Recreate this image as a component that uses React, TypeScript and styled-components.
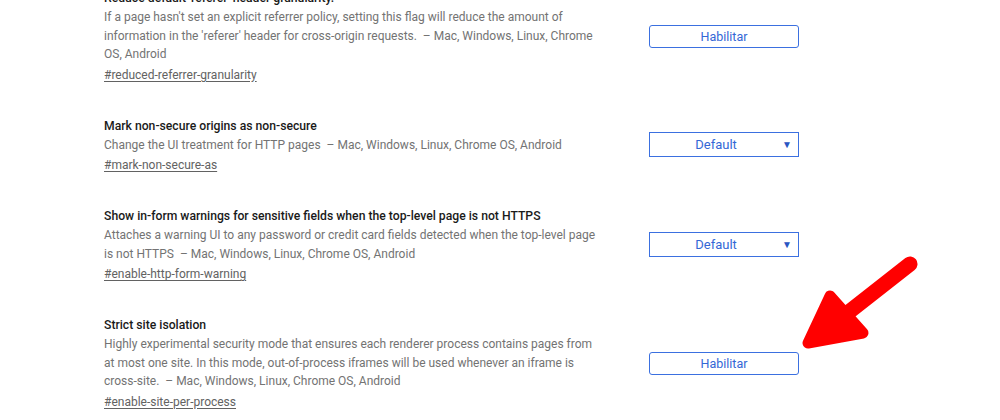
import React from "react";
import styled, { createGlobalStyle } from "styled-components";

const GlobalStyle = createGlobalStyle`
  html, body {
    margin: 0;
    padding: 0;
    background: #fff;
    overflow: hidden;
  }
  body {
    font-family: Roboto, "Liberation Sans", Arial, sans-serif;
    font-size: 12px;
  }
`;

const Page = styled.div`
  position: relative;
  width: 1000px;
  height: 420px;
  overflow: hidden;
`;

const List = styled.div`
  display: flex;
  flex-direction: column;
  gap: 33px;
  margin-top: -11px;
  padding-left: 104px;
`;

const Experiment = styled.div`
  display: grid;
  grid-template-columns: 500px 150px;
  column-gap: 45px;
  align-items: center;
`;

const Title = styled.div`
  font-weight: 500;
  font-size: 12.2px;
  color: #1a1a1a;
  line-height: 18px;
  margin-bottom: 1px;
  white-space: nowrap;
`;

const Description = styled.p`
  margin: 0;
  color: #737373;
  font-size: 12px;
  line-height: 18.5px;
`;

const Permalink = styled.a`
  display: inline-block;
  margin-top: 2px;
  line-height: 18px;
  font-size: 12px;
  color: #626262;
  text-decoration: underline;
  text-underline-offset: 2px;
`;

const ActionButton = styled.button`
  width: 150px;
  height: 23px;
  padding: 0;
  border: 1px solid #3b70e0;
  border-radius: 3px;
  background: #fff;
  color: #3367d6;
  font-family: Roboto, "Liberation Sans", Arial, sans-serif;
  font-size: 12.5px;
`;

const SelectBox = styled.div`
  box-sizing: border-box;
  width: 150px;
  height: 25px;
  margin-top: -2px;
  border: 1px solid #3b70e0;
  display: grid;
  grid-template-columns: 1fr auto;
  align-items: center;
  color: #3367d6;
  font-size: 13px;
`;

const SelectLabel = styled.span`
  text-align: center;
`;

const Caret = styled.span`
  font-size: 10px;
  padding-right: 6px;
  color: #2b55c2;
`;

const ArrowLayer = styled.svg`
  position: absolute;
  left: 0;
  top: 0;
  pointer-events: none;
`;

type Flag = {
  title: string;
  description: string;
  link: string;
  control: "button" | "select";
};

const platforms = "\u00a0 – Mac, Windows, Linux, Chrome OS, Android";

const flags: Flag[] = [
  {
    title: "Reduce default 'referer' header granularity.",
    description:
      "If a page hasn't set an explicit referrer policy, setting this flag will reduce the amount of information in the 'referer' header for cross-origin requests." +
      platforms,
    link: "#reduced-referrer-granularity",
    control: "button",
  },
  {
    title: "Mark non-secure origins as non-secure",
    description: "Change the UI treatment for HTTP pages" + platforms,
    link: "#mark-non-secure-as",
    control: "select",
  },
  {
    title:
      "Show in-form warnings for sensitive fields when the top-level page is not HTTPS",
    description:
      "Attaches a warning UI to any password or credit card fields detected when the top-level page is not HTTPS" +
      platforms,
    link: "#enable-http-form-warning",
    control: "select",
  },
  {
    title: "Strict site isolation",
    description:
      "Highly experimental security mode that ensures each renderer process contains pages from at most one site. In this mode, out-of-process iframes will be used whenever an iframe is cross-site." +
      platforms,
    link: "#enable-site-per-process",
    control: "button",
  },
];

export default function App() {
  return (
    <Page>
      <GlobalStyle />
      <List>
        {flags.map((f) => (
          <Experiment key={f.link}>
            <div>
              <Title>{f.title}</Title>
              <Description>{f.description}</Description>
              <Permalink href={f.link}>{f.link}</Permalink>
            </div>
            {f.control === "button" ? (
              <ActionButton>Habilitar</ActionButton>
            ) : (
              <SelectBox>
                <SelectLabel>Default</SelectLabel>
                <Caret>▼</Caret>
              </SelectBox>
            )}
          </Experiment>
        ))}
      </List>
      <ArrowLayer width="1000" height="420" viewBox="0 0 1000 420">
        <line
          x1="910"
          y1="264"
          x2="845"
          y2="315"
          stroke="#ff0000"
          strokeWidth="15"
          strokeLinecap="round"
        />
        <polygon
          points="808,343 830,296 863,333"
          fill="#ff0000"
          stroke="#ff0000"
          strokeWidth="11"
          strokeLinejoin="round"
        />
      </ArrowLayer>
    </Page>
  );
}
